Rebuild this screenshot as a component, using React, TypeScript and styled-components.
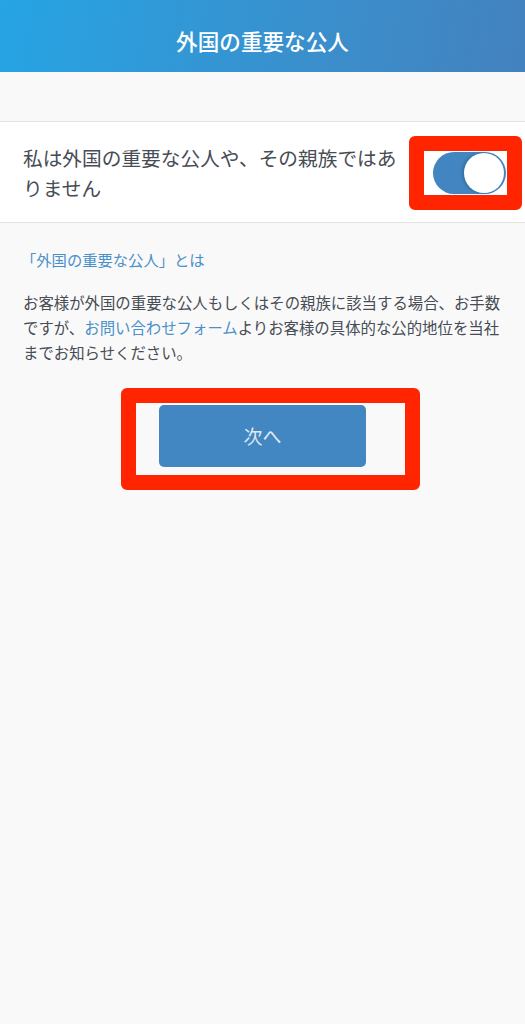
import React from "react";
import styled, { createGlobalStyle } from "styled-components";

const GlobalStyle = createGlobalStyle`
  html, body {
    margin: 0;
    padding: 0;
    background: #f9f9f9;
  }
  body {
    font-family: "Noto Sans CJK JP", "Noto Sans", sans-serif;
    color: #474c55;
  }
  * { box-sizing: border-box; }
`;

const Page = styled.div`
  min-height: 1024px;
  background: #f9f9f9;
  display: flex;
  flex-direction: column;
`;

const Header = styled.header`
  height: 72px;
  background: linear-gradient(100deg, #26a4e4 0%, #3a8fcc 60%, #4382bf 100%);
  display: flex;
  align-items: center;
  justify-content: center;
`;

const Title = styled.h1`
  margin: 0;
  padding-top: 10px;
  font-size: 21.6px;
  font-weight: 500;
  color: #ffffff;
  line-height: 30px;
`;

const Spacer = styled.div`
  height: 49px;
`;

const Row = styled.div`
  background: #ffffff;
  border-top: 1px solid #e3e3e3;
  border-bottom: 1px solid #e3e3e3;
  height: 102px;
  display: flex;
  align-items: center;
  padding: 0 19px 0 23px;
`;

const RowText = styled.p`
  flex: 1;
  margin: 0;
  padding-top: 2px;
  font-size: 19.7px;
  line-height: 30px;
  color: #474c55;
`;

const ToggleWrap = styled.div`
  position: relative;
  flex-shrink: 0;
  margin-left: 20px;
  margin-top: 1px;
`;

const Track = styled.div`
  width: 73px;
  height: 42px;
  border-radius: 21px;
  background: #4285c1;
  display: flex;
  align-items: center;
  justify-content: flex-end;
  padding-right: 2px;
`;

const Knob = styled.div`
  width: 40px;
  height: 40px;
  border-radius: 50%;
  background: #ffffff;
  box-shadow: -2px 0 3px rgba(0, 0, 0, 0.18);
`;

const Annotation = styled.div<{ $t: number; $r: number; $b: number; $l: number }>`
  position: absolute;
  top: ${(p) => p.$t}px;
  right: ${(p) => p.$r}px;
  bottom: ${(p) => p.$b}px;
  left: ${(p) => p.$l}px;
  border: 15px solid #ff2500;
  border-radius: 6px;
  pointer-events: none;
`;

const Content = styled.section`
  padding: 24px 23px 0 23px;
  display: flex;
  flex-direction: column;
`;

const InfoLink = styled.a`
  font-size: 15.3px;
  line-height: 25px;
  color: #4a90c9;
  text-decoration: none;
  margin-left: -2px;
`;

const Paragraph = styled.p`
  margin: 18px 0 0 0;
  font-size: 15.4px;
  line-height: 25px;
  color: #474c55;
`;

const InlineLink = styled.a`
  color: #4a90c9;
  text-decoration: none;
`;

const ButtonArea = styled.div`
  display: flex;
  justify-content: center;
  margin-top: 40px;
`;

const ButtonWrap = styled.div`
  position: relative;
`;

const NextButton = styled.button`
  width: 207px;
  height: 62px;
  border: none;
  border-radius: 5px;
  background: #4286c2;
  color: #dfe9f4;
  font-family: "Noto Sans CJK JP", "Noto Sans", sans-serif;
  font-size: 19px;
  line-height: 24px;
  padding: 0;
  display: flex;
  align-items: center;
  justify-content: center;
`;

export default function App() {
  return (
    <>
      <GlobalStyle />
      <Page>
        <Header>
          <Title>外国の重要な公人</Title>
        </Header>
        <Spacer />
        <Row>
          <RowText>私は外国の重要な公人や、その親族ではありません</RowText>
          <ToggleWrap>
            <Track>
              <Knob />
            </Track>
            <Annotation $t={-16} $r={-16} $b={-16} $l={-24} />
          </ToggleWrap>
        </Row>
        <Content>
          <InfoLink href="#">「外国の重要な公人」とは</InfoLink>
          <Paragraph>
            お客様が外国の重要な公人もしくはその親族に該当する場合、お手数ですが、
            <InlineLink href="#">お問い合わせフォーム</InlineLink>
            よりお客様の具体的な公的地位を当社までお知らせください。
          </Paragraph>
        </Content>
        <ButtonArea>
          <ButtonWrap>
            <NextButton>次へ</NextButton>
            <Annotation $t={-17} $r={-54} $b={-23} $l={-38} />
          </ButtonWrap>
        </ButtonArea>
      </Page>
    </>
  );
}
